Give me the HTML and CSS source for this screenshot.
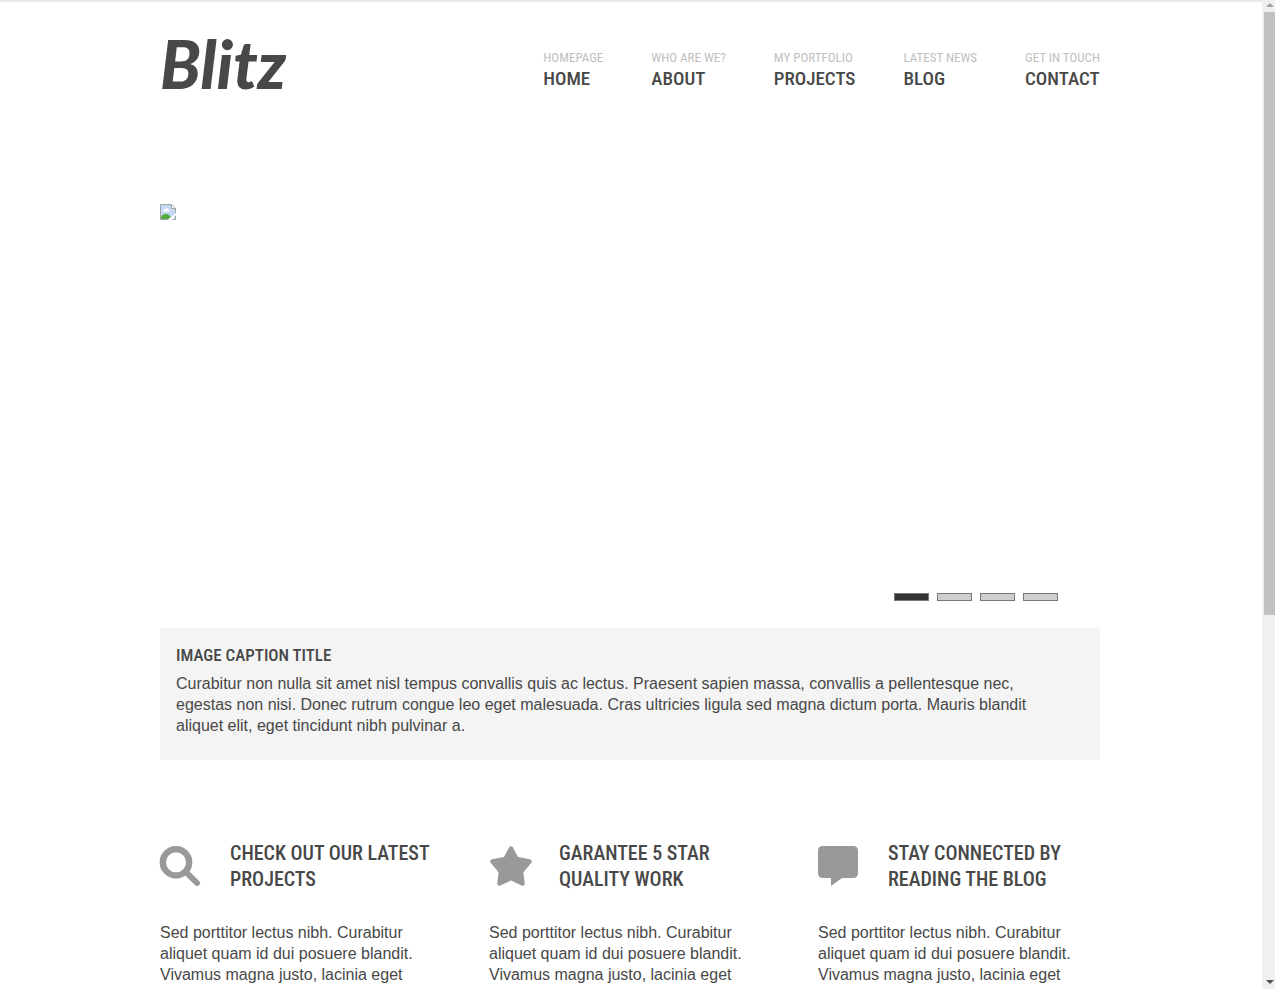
FILE: index.html
```html
<!DOCTYPE html>
<html lang="en">
<head>
<meta charset="utf-8">
<title>Blitz</title>
<link rel="stylesheet" href="styles.css">
</head>
<body>
<div class="page">
  <div class="container">
    <header class="header">
      <a class="logo" href="#">Blitz</a>
      <nav class="nav" aria-label="Main">
        <a class="nav-item" href="#"><span class="nav-sub">HOMEPAGE</span><span class="nav-title">HOME</span></a>
        <a class="nav-item" href="#"><span class="nav-sub">WHO ARE WE?</span><span class="nav-title">ABOUT</span></a>
        <a class="nav-item" href="#"><span class="nav-sub">MY PORTFOLIO</span><span class="nav-title">PROJECTS</span></a>
        <a class="nav-item" href="#"><span class="nav-sub">LATEST NEWS</span><span class="nav-title">BLOG</span></a>
        <a class="nav-item" href="#"><span class="nav-sub">GET IN TOUCH</span><span class="nav-title">CONTACT</span></a>
      </nav>
    </header>
    <main>
      <section class="slider">
        <div class="slide">
          <svg class="broken" width="16" height="16" viewBox="0 0 16 16" aria-hidden="true">
            <path d="M.5.5h11l4 4v11H.5z" fill="#c6d7f5" stroke="#a3a3a3"/>
            <path d="M11.5.5v4h4z" fill="#fff" stroke="#a3a3a3"/>
            <path d="M3 7c0-2 2-2 2.500-1.500C6 3 9 4 8.500 6c1.500 0 1.500 1.500 0 1.500H3z" fill="#fff"/>
            <path d="M1 15v-2c3-4 6-4 9-1l1 1-3 2z" fill="#55aa3e"/>
            <path d="M8 16 16 9v2l-4 5z" fill="#fff"/>
          </svg>
          <div class="pager">
            <button class="dot active" aria-label="Slide 1"></button>
            <button class="dot" aria-label="Slide 2"></button>
            <button class="dot" aria-label="Slide 3"></button>
            <button class="dot" aria-label="Slide 4"></button>
          </div>
        </div>
        <div class="caption">
          <h2 class="caption-title">IMAGE CAPTION TITLE</h2>
          <p class="text">Curabitur non nulla sit amet nisl tempus convallis quis ac lectus. Praesent sapien massa, convallis a pellentesque nec,<br>egestas non nisi. Donec rutrum congue leo eget malesuada. Cras ultricies ligula sed magna dictum porta. Mauris blandit<br>aliquet elit, eget tincidunt nibh pulvinar a.</p>
        </div>
      </section>
      <section class="features">
        <article class="feature">
          <div class="feature-head">
            <svg class="icon" width="44" height="44" viewBox="0 0 44 44" aria-hidden="true"><circle cx="16" cy="18.300" r="13.200" fill="none" stroke="#999" stroke-width="6.300"/><path d="m26 28 11 11" stroke="#999" stroke-width="6" stroke-linecap="round"/></svg>
            <h3 class="feature-title">CHECK OUT OUR LATEST<br>PROJECTS</h3>
          </div>
          <p class="text">Sed porttitor lectus nibh. Curabitur<br>aliquet quam id dui posuere blandit.<br>Vivamus magna justo, lacinia eget</p>
        </article>
        <article class="feature">
          <div class="feature-head">
            <svg class="icon" width="44" height="44" viewBox="0 0 44 44" aria-hidden="true"><path d="M22 4.500 27.500 15 40.500 17.500 32 27.500 33.500 39.500 22 34 10.500 39.500 12 27.500 3.500 17.500 16.500 15z" fill="#999" stroke="#999" stroke-width="4.500" stroke-linejoin="round"/></svg>
            <h3 class="feature-title">GARANTEE 5 STAR<br>QUALITY WORK</h3>
          </div>
          <p class="text">Sed porttitor lectus nibh. Curabitur<br>aliquet quam id dui posuere blandit.<br>Vivamus magna justo, lacinia eget</p>
        </article>
        <article class="feature">
          <div class="feature-head">
            <svg class="icon" width="44" height="44" viewBox="0 0 44 44" aria-hidden="true"><path d="M5 2h30q5 0 5 5v22q0 5-5 5H24l-11 8v-8H5q-5 0-5-5V7q0-5 5-5z" fill="#999"/></svg>
            <h3 class="feature-title">STAY CONNECTED BY<br>READING THE BLOG</h3>
          </div>
          <p class="text">Sed porttitor lectus nibh. Curabitur<br>aliquet quam id dui posuere blandit.<br>Vivamus magna justo, lacinia eget</p>
        </article>
      </section>
    </main>
  </div>
</div>
<div class="scrollbar" aria-hidden="true">
  <svg class="arrow" width="13" height="12" viewBox="0 0 13 12"><path d="m4 7 4-4 4 4z" fill="#a3a3a3"/></svg>
  <div class="thumb"></div>
  <svg class="arrow arrow-end" width="13" height="12" viewBox="0 0 13 12"><path d="m4 3h8l-4 4z" fill="#505050"/></svg>
</div>
</body>
</html>
```
FILE: styles.css
```css
* { box-sizing: border-box; margin: 0; padding: 0; }
body {
  min-height: 100vh;
  background: #fff;
  color: #484848;
  font-family: "Liberation Sans", Arial, sans-serif;
}
.page { border-top: 2px solid #e9e9e9; padding-right: 15px; }
.container { max-width: 940px; margin: 0 auto; }
.header { display: flex; justify-content: space-between; align-items: flex-start; padding-top: 28px; }
.logo { color: #484848; font: italic 900 66px/68px Lato, sans-serif; text-decoration: none; }
.nav { display: flex; gap: 48px; padding-top: 20px; font-family: "Roboto Condensed", "Liberation Sans Narrow", sans-serif; }
.nav-item { display: flex; flex-direction: column; color: #484848; text-decoration: none; white-space: nowrap; }
.nav-sub { color: #bfbfbf; font-size: 13px; line-height: 16px; }
.nav-title { font-size: 19px; line-height: 26px; font-weight: 500; }
.slider { padding-top: 106px; }
.slide { display: flex; flex-direction: column; justify-content: space-between; height: 397px; }
.broken { display: block; }
.pager { display: flex; gap: 8px; align-self: flex-end; margin-right: 42px; }
.dot { width: 35px; height: 8px; border: 1px solid #777; background: #cfcfcf; }
.dot.active { background: #333; }
.caption { margin-top: 27px; padding: 14px 16px 24px; background: #f4f4f4; }
.caption-title { font: 500 17px/26px "Roboto Condensed", "Liberation Sans Narrow", sans-serif; margin-bottom: 5px; }
.text { font-size: 16px; line-height: 21px; white-space: nowrap; }
.features { display: grid; grid-template-columns: repeat(3, minmax(0, 1fr)); gap: 47px; padding-top: 80px; }
.feature-head { display: flex; gap: 26px; margin-bottom: 30px; }
.icon { display: block; flex: none; margin-top: 4px; overflow: visible; }
.feature-title { font: 500 20px/26px "Roboto Condensed", "Liberation Sans Narrow", sans-serif; white-space: nowrap; }
.scrollbar { position: fixed; top: 0; right: 0; bottom: 0; width: 13px; display: flex; flex-direction: column; background: #f0f0f0; }
.arrow { display: block; flex: none; }
.arrow-end { margin-top: auto; }
.thumb { height: 61%; margin-left: 2px; background: #c1c1c1; }
```
